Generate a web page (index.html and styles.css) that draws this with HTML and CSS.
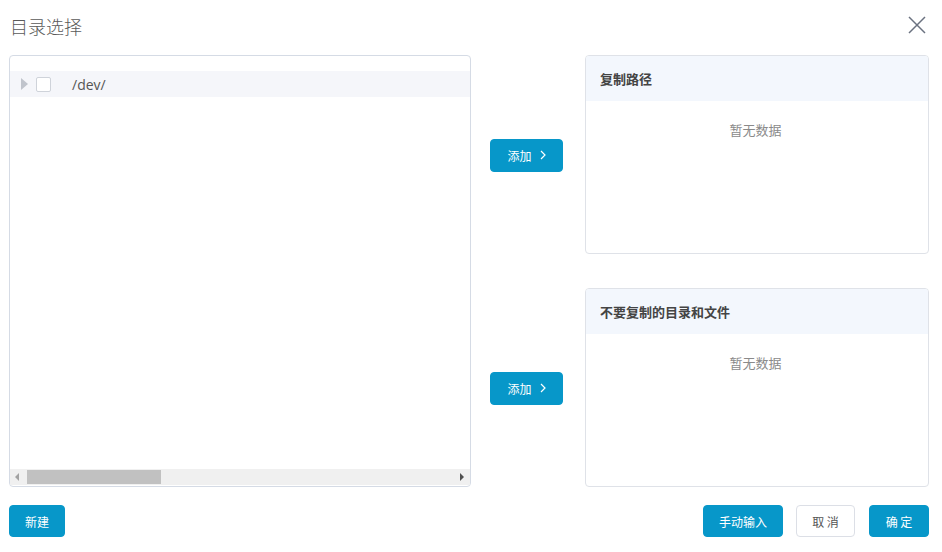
FILE: index.html
```html
<!DOCTYPE html>
<html lang="zh">
<head>
<meta charset="utf-8">
<link rel="stylesheet" href="styles.css">
</head>
<body>
<div class="dialog">
  <div class="head">
    <div class="title">目录选择</div>
    <svg class="close" width="18" height="18" viewBox="0 0 18 18"><path d="M1 1L17 17M17 1L1 17" stroke="#6b7280" stroke-width="1.5" fill="none"/></svg>
  </div>
  <div class="main">
    <div class="tree">
      <div class="tree-body">
        <div class="row">
          <span class="caret"></span>
          <span class="check"></span>
          <span class="label">/dev/</span>
        </div>
      </div>
      <div class="hscroll">
        <span class="arr arr-l"></span>
        <div class="track"><div class="thumb"></div></div>
        <span class="arr arr-r"></span>
      </div>
    </div>
    <div class="mid">
      <div class="slot"><button class="btn add">添加<svg class="chev" width="6" height="10" viewBox="0 0 6 10"><path d="M1 1L5 5L1 9" stroke="#fff" stroke-width="1.2" fill="none"/></svg></button></div>
      <div class="slot"><button class="btn add">添加<svg class="chev" width="6" height="10" viewBox="0 0 6 10"><path d="M1 1L5 5L1 9" stroke="#fff" stroke-width="1.2" fill="none"/></svg></button></div>
    </div>
    <div class="side">
      <div class="card">
        <div class="card-head">复制路径</div>
        <div class="empty">暂无数据</div>
      </div>
      <div class="card">
        <div class="card-head">不要复制的目录和文件</div>
        <div class="empty">暂无数据</div>
      </div>
    </div>
  </div>
  <div class="foot">
    <button class="btn new">新建</button>
    <div class="actions">
      <button class="btn manual">手动输入</button>
      <button class="btn ghost">取 消</button>
      <button class="btn ok">确 定</button>
    </div>
  </div>
</div>
</body>
</html>
```
FILE: styles.css
```css
html, body {
  margin: 0;
  padding: 0;
  background: #fff;
  font-family: "Noto Sans CJK SC", "Noto Sans", sans-serif;
}
.dialog {
  width: 942px;
  height: 552px;
  box-sizing: border-box;
  padding: 0 13px 0 9px;
}
.head {
  height: 55px;
  display: flex;
  justify-content: space-between;
  align-items: flex-start;
}
.title {
  margin-top: 13px;
  margin-left: 1px;
  font-size: 18px;
  line-height: 26px;
  color: #5a5a5a;
  font-weight: 300;
}
.close {
  margin-top: 16px;
  margin-right: 3px;
}
.main {
  display: flex;
  height: 432px;
}
.tree {
  width: 462px;
  box-sizing: border-box;
  border: 1px solid #d5dbe5;
  border-radius: 4px;
  display: flex;
  flex-direction: column;
  overflow: hidden;
}
.tree-body {
  flex: 1;
  padding-top: 15px;
}
.row {
  height: 26px;
  background: #f5f6fa;
  display: flex;
  align-items: center;
}
.caret {
  width: 0;
  height: 0;
  border-left: 7px solid #c0c4cc;
  border-top: 6px solid transparent;
  border-bottom: 6px solid transparent;
  margin-left: 11px;
}
.check {
  width: 13px;
  height: 13px;
  border: 1px solid #cfd3da;
  border-radius: 2px;
  background: #fff;
  margin-left: 8px;
}
.label {
  margin-left: 21px;
  font-family: "Open Sans", "Noto Sans", sans-serif;
  font-size: 14px;
  color: #555;
}
.hscroll {
  height: 16px;
  margin-bottom: 1px;
  background: #f0f0f0;
  display: flex;
  align-items: center;
}
.arr {
  width: 0;
  height: 0;
  border-top: 4px solid transparent;
  border-bottom: 4px solid transparent;
}
.arr-l {
  border-right: 4px solid #a3a3a3;
  margin-left: 5px;
}
.arr-r {
  border-left: 4px solid #505050;
  margin-right: 6px;
}
.track {
  flex: 1;
  height: 14px;
  margin: 0 8px;
}
.thumb {
  width: 134px;
  height: 14px;
  background: #c1c1c1;
}
.mid {
  width: 114px;
  display: grid;
  grid-template-rows: 199px 199px;
  row-gap: 34px;
}
.slot {
  display: flex;
  justify-content: center;
  align-items: center;
  padding-right: 3px;
  padding-top: 1px;
}
.side {
  width: 344px;
  display: grid;
  grid-template-rows: 199px 199px;
  row-gap: 34px;
}
.card {
  box-sizing: border-box;
  border: 1px solid #dfe2e8;
  border-radius: 4px;
  overflow: hidden;
}
.card-head {
  height: 45px;
  background: #f3f7fd;
  padding-left: 14px;
  font-size: 13px;
  font-weight: bold;
  color: #444;
  line-height: 45px;
}
.empty {
  text-align: center;
  font-size: 13px;
  color: #8a8a8a;
  padding-top: 19px;
  padding-right: 3px;
}
.btn {
  font-family: "Noto Sans CJK SC", "Noto Sans", sans-serif;
  border: 1px solid #0797c9;
  background: #0797c9;
  color: #fff;
  font-size: 12px;
  border-radius: 4px;
  height: 32px;
  padding: 0;
  cursor: pointer;
}
.add {
  width: 73px;
  height: 33px;
  display: flex;
  align-items: center;
  justify-content: center;
}
.chev {
  margin-left: 8px;
}
.foot {
  margin-top: 18px;
  display: flex;
  justify-content: space-between;
}
.new {
  width: 56px;
}
.actions {
  display: flex;
  gap: 13px;
}
.manual {
  width: 80px;
}
.ghost {
  width: 59px;
  background: #fff;
  color: #555;
  border-color: #dcdfe6;
}
.ok {
  width: 60px;
  margin-left: 1px;
}
```
